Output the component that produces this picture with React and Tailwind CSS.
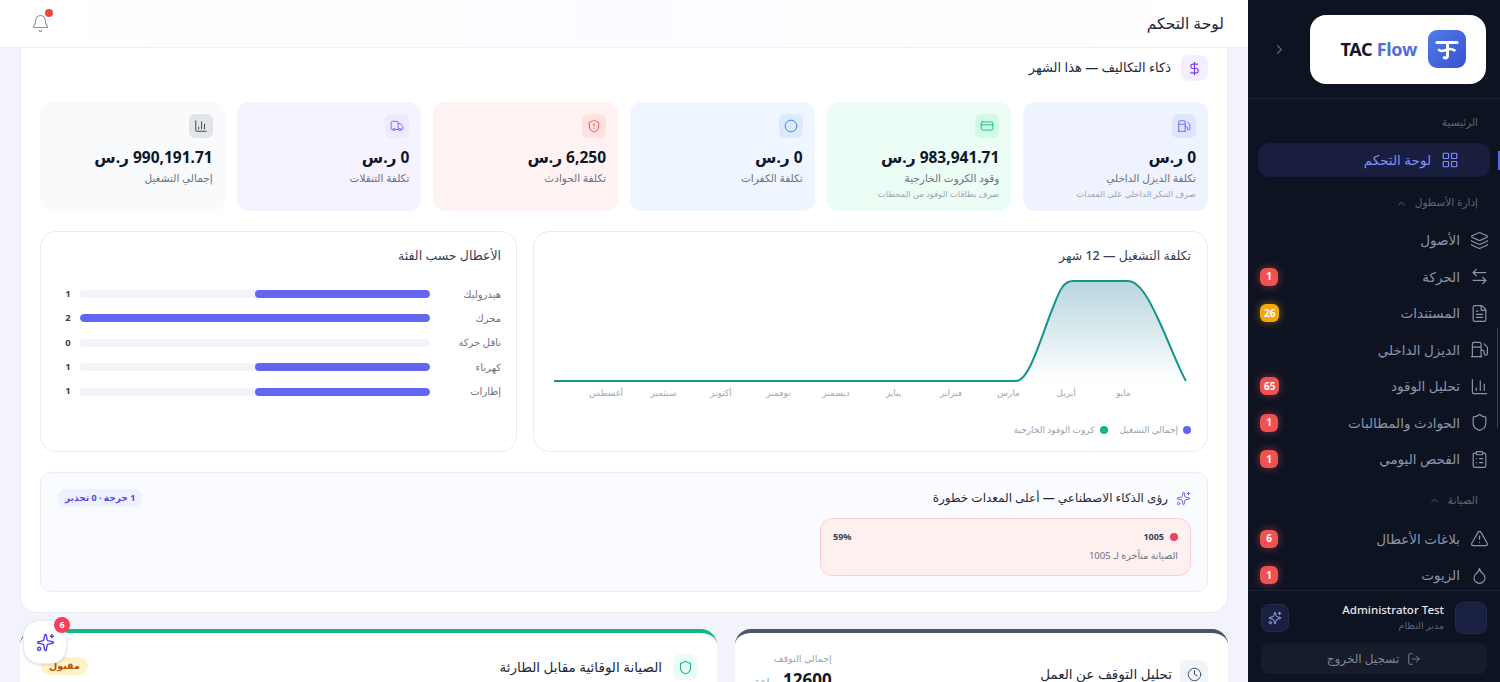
import React from "react";
import {
  LayoutGrid, Layers, ArrowLeftRight, FileText, Fuel, ChartColumn, Shield, ClipboardList,
  TriangleAlert, Droplet, Sparkles, LogOut, Bell, DollarSign, CreditCard, Circle, ShieldAlert,
  Truck, Clock, ChevronLeft, ChevronUp,
} from "lucide-react";

const fleetItems = [
  { label: "الأصول", icon: Layers },
  { label: "الحركة", icon: ArrowLeftRight, badge: "1" },
  { label: "المستندات", icon: FileText, badge: "26", amber: true },
  { label: "الديزل الداخلي", icon: Fuel },
  { label: "تحليل الوقود", icon: ChartColumn, badge: "65" },
  { label: "الحوادث والمطالبات", icon: Shield, badge: "1" },
  { label: "الفحص اليومي", icon: ClipboardList, badge: "1" },
];

const maintenanceItems = [
  { label: "بلاغات الأعطال", icon: TriangleAlert, badge: "6" },
  { label: "الزيوت", icon: Droplet, badge: "1" },
];

const kpis = [
  { value: "0 ر.س", label: "تكلفة الديزل الداخلي", sub: "صرف التنكر الداخلي على المعدات", icon: Fuel, card: "bg-[#eff3fe]", box: "bg-[#dfe5fb] text-[#6366f1]" },
  { value: "983,941.71 ر.س", label: "وقود الكروت الخارجية", sub: "صرف بطاقات الوقود من المحطات", icon: CreditCard, card: "bg-[#ecfdf5]", box: "bg-[#d1fae5] text-[#10b981]" },
  { value: "0 ر.س", label: "تكلفة الكفرات", icon: Circle, card: "bg-[#eff6ff]", box: "bg-[#dbeafe] text-[#3b82f6]" },
  { value: "6,250 ر.س", label: "تكلفة الحوادث", icon: ShieldAlert, card: "bg-[#fef2f2]", box: "bg-[#fee2e2] text-[#ef4444]" },
  { value: "0 ر.س", label: "تكلفة التنقلات", icon: Truck, card: "bg-[#f5f3ff]", box: "bg-[#ede9fe] text-[#8b5cf6]" },
  { value: "990,191.71 ر.س", label: "إجمالي التشغيل", icon: ChartColumn, card: "bg-[#f8fafc]", box: "bg-[#e2e4e8] text-[#374151]" },
];

const faults = [
  { label: "هيدروليك", count: 1 },
  { label: "محرك", count: 2 },
  { label: "ناقل حركة", count: 0 },
  { label: "كهرباء", count: 1 },
  { label: "إطارات", count: 1 },
];

const months = ["يونيو", "مايو", "أبريل", "مارس", "فبراير", "يناير", "ديسمبر", "نوفمبر", "أكتوبر", "سبتمبر", "أغسطس"];

function NavItem({ item }) {
  const Icon = item.icon;
  return (
    <div className="h-[36.5px] flex items-center pr-[11px] pl-[12px] gap-[10px] text-[#8a93a8]">
      <Icon size={19} strokeWidth={1.5} className="shrink-0" />
      <span className="flex-1 text-[13.5px]">{item.label}</span>
      {item.badge && (
        <span className={`h-[18px] min-w-[18px] px-1 rounded-md flex items-center justify-center text-[10px] font-bold text-white ${item.amber ? "bg-[#f5a70b] shadow-[0_0_8px_#f5a70b80]" : "bg-[#f05252] shadow-[0_0_8px_#f0525280]"}`}>
          {item.badge}
        </span>
      )}
    </div>
  );
}

function Sidebar() {
  return (
    <aside className="w-[252px] shrink-0 h-full bg-[#0e1322] flex flex-col relative">
      <div className="h-[99px] shrink-0 border-b border-[#1c2233] flex items-center justify-between pr-[14px] pl-[24px]">
        <div className="w-[176px] h-[69px] bg-white rounded-2xl flex items-center gap-[11px] pr-[20px]">
          <svg width="38" height="38" viewBox="0 0 38 38">
            <defs>
              <linearGradient id="logo" x1="0" y1="0" x2="1" y2="1">
                <stop offset="0" stopColor="#4f7de8" />
                <stop offset="1" stopColor="#3b50d0" />
              </linearGradient>
            </defs>
            <rect width="38" height="38" rx="9" fill="url(#logo)" />
            <path d="M9 12.5h20" stroke="#fff" strokeWidth="3.2" strokeLinecap="round" fill="none" />
            <path d="M19.5 13v13c0 2-2 2.6-3.4 1.6" stroke="#fff" strokeWidth="3" strokeLinecap="round" fill="none" />
            <path d="M11 20c3 2.4 5 .4 8.500-.6 3-.8 5-.3 7 1" stroke="#fff" strokeWidth="2.600" strokeLinecap="round" fill="none" />
          </svg>
          <span dir="ltr" className="text-[18px] font-bold text-[#111827] tracking-[-0.3px]">
            TAC <span className="text-[#4f6fd8]">Flow</span>
          </span>
        </div>
        <ChevronLeft size={15} className="text-[#5b6377] rotate-180" />
      </div>

      <div className="flex-1 overflow-hidden">
        <div className="text-[10.5px] text-[#5d6579] pr-[22px] mt-[15px] h-[16px] leading-4">الرئيسية</div>
        <div className="mr-[10px] ml-[10px] mt-[13px] h-[34px] rounded-xl bg-[#191e3f] flex items-center gap-[10px] pr-[1px] text-[#818cf8]">
          <div className="w-[20px]" />
          <LayoutGrid size={18} strokeWidth={1.6} className="shrink-0" />
          <span className="text-[13.5px]">لوحة التحكم</span>
        </div>
        <div className="flex items-center gap-2 text-[10.5px] text-[#5d6579] pr-[22px] mt-[18px] mb-[11px] h-[16px]">
          <span>إدارة الأسطول</span>
          <ChevronUp size={11} />
        </div>
        {fleetItems.map((item) => (
          <NavItem key={item.label} item={item} />
        ))}
        <div className="flex items-center gap-2 text-[10.5px] text-[#5d6579] pr-[22px] mt-[15px] mb-[12px] h-[16px]">
          <span>الصيانة</span>
          <ChevronUp size={11} />
        </div>
        {maintenanceItems.map((item) => (
          <NavItem key={item.label} item={item} />
        ))}
      </div>

      <div className="shrink-0 h-[92px] border-t border-[#1c2233] bg-[#0e1322] px-[13px] pt-[11px]">
        <div className="flex items-center gap-[11px]">
          <div className="w-8 h-8 rounded-lg bg-[#1a2040] border border-[#232a4d]" />
          <div className="flex-1">
            <div dir="ltr" className="text-[11.500px] leading-4 text-[#e5e7eb] text-right font-medium">Administrator Test</div>
            <div className="text-[9.5px] leading-4 text-[#5d6579]">مدير النظام</div>
          </div>
          <div className="w-[28px] h-[28px] rounded-lg bg-[#1a2040] border border-[#232a4d] flex items-center justify-center text-[#a5b4fc]">
            <Sparkles size={14} strokeWidth={1.6} />
          </div>
        </div>
        <div className="mt-[9px] h-[31px] rounded-lg bg-[#171c2a] flex items-center justify-center gap-2 text-[#7d8598] text-[12px]">
          <LogOut size={14} strokeWidth={1.6} className="order-first" />
          <span>تسجيل الخروج</span>
        </div>
      </div>

      <div className="absolute right-0 top-[151px] w-[2px] h-[19px] bg-[#6366f1]" />
      <div className="absolute right-[2px] top-[328px] w-[1.5px] h-[100px] bg-[#3a4152]" />
    </aside>
  );
}

function KpiCard({ kpi }) {
  const Icon = kpi.icon;
  return (
    <div className={`h-[109px] rounded-xl p-3 ${kpi.card}`}>
      <div className={`w-6 h-6 rounded-md flex items-center justify-center ${kpi.box}`}>
        <Icon size={14} strokeWidth={1.6} />
      </div>
      <div className="mt-[7px] text-[15.5px] leading-6 font-bold text-[#0f172a]">{kpi.value}</div>
      <div className="text-[10.5px] leading-4 mt-[1px] text-[#6b7280]">{kpi.label}</div>
      {kpi.sub && <div className="text-[8.5px] leading-3 mt-[2px] text-[#9ca3af]">{kpi.sub}</div>}
    </div>
  );
}

function CostChart() {
  return (
    <div className="h-[221px] rounded-2xl border border-[#e8ecf2] bg-white pt-4 px-4">
      <div className="text-[12.5px] leading-4 text-[#374151] font-medium">تكلفة التشغيل — 12 شهر</div>
      <svg width="641" height="125" viewBox="0 0 641 125" className="block mt-[9px] mx-auto">
        <defs>
          <linearGradient id="area" x1="0" y1="0" x2="0" y2="1">
            <stop offset="0" stopColor="#0e7490" stopOpacity="0.3" />
            <stop offset="1" stopColor="#0e7490" stopOpacity="0" />
          </linearGradient>
        </defs>
        <path d="M4 108H466C480 108 492 60 504 32C510 16 514 8 523 8H578C590 8 600 28 610 50C620 72 630 98 636 108Z" fill="url(#area)" />
        <path d="M4 108H466C480 108 492 60 504 32C510 16 514 8 523 8H578C590 8 600 28 610 50C620 72 630 98 636 108" fill="none" stroke="#14958c" strokeWidth="2" />
        {months.map((m, i) => (
          <text key={m} x={i === 0 ? 641 : 631 - i * 57.5} y="123" textAnchor={i === 0 ? "end" : "middle"} fontSize="9" fill="#a3a9b5" direction="rtl">{m}</text>
        ))}
      </svg>
      <div className="flex items-center gap-3 mt-[25px] text-[9px] text-[#9ca3af]">
        <span className="flex items-center gap-[5px]"><i className="w-2 h-2 rounded-sm bg-[#6366f1]" />إجمالي التشغيل</span>
        <span className="flex items-center gap-[5px]"><i className="w-2 h-2 rounded-sm bg-[#10b981]" />كروت الوقود الخارجية</span>
      </div>
    </div>
  );
}

function FaultChart() {
  return (
    <div className="h-[221px] rounded-2xl border border-[#e8ecf2] bg-white pt-4 px-[15px]">
      <div className="text-[12.5px] leading-4 text-[#374151] font-medium">الأعطال حسب الفئة</div>
      <div className="mt-[22px] flex flex-col gap-[8.4px]">
        {faults.map((f) => (
          <div key={f.label} className="h-4 flex items-center text-[10px] text-[#6b7280]">
            <span className="w-[71px] shrink-0">{f.label}</span>
            <div className="w-[350px] h-2 rounded-full bg-[#f1f5f9] overflow-hidden">
              {f.count > 0 && <div className={`h-full rounded-full bg-[#6366f1] ${f.count === 2 ? "w-full" : "w-1/2"}`} />}
            </div>
            <span className="flex-1 text-center font-bold text-[#374151] text-[9.5px]">{f.count}</span>
          </div>
        ))}
      </div>
    </div>
  );
}

function AiInsights() {
  return (
    <div className="mt-5 h-[120px] rounded-xl border border-[#e8ecf7] bg-[#fafbff] px-4 pt-4">
      <div className="flex items-center justify-between h-[18px]">
        <div className="flex items-center gap-2">
          <Sparkles size={15} strokeWidth={1.6} className="text-[#6366f1]" />
          <span className="text-[12px] text-[#1f2937] font-medium">رؤى الذكاء الاصطناعي — أعلى المعدات خطورة</span>
        </div>
        <span className="h-[18px] px-2 rounded-full bg-[#eef2ff] text-[#4f46e5] text-[9px] font-bold flex items-center">1 حرجة · 0 تحذير</span>
      </div>
      <div className="mt-[11px] w-[371px] h-[58px] rounded-xl bg-[#fff0f0] border border-[#fecdd3] px-3 pt-[10px]">
        <div className="flex items-center justify-between text-[9px] font-bold text-[#374151] h-4">
          <span className="flex items-center gap-[6px]">
            <i className="w-2 h-2 rounded-full bg-[#f43f5e]" />
            1005
          </span>
          <span>59%</span>
        </div>
        <div className="mt-[4px] text-[9.5px] text-[#6b7280]">الصيانة متأخرة لـ 1005</div>
      </div>
    </div>
  );
}

export default function App() {
  return (
    <div dir="rtl" className="w-screen h-screen overflow-hidden flex bg-[#f3f4fb] font-['Noto_Sans','DejaVu_Sans',sans-serif]">
      <Sidebar />
      <main className="flex-1 min-w-0 h-full flex flex-col relative">
        <header className="h-12 shrink-0 bg-gradient-to-l from-white via-[#fdfbff] to-white border-b border-[#eef0f5] flex items-center justify-between pr-6 pl-[31px]">
          <h1 className="text-[15.5px] text-[#1f2937]">لوحة التحكم</h1>
          <div className="relative">
            <Bell size={19} strokeWidth={1.3} className="text-[#8a8f99]" />
            <span className="absolute top-[-5px] left-[14px] w-2 h-2 rounded-full bg-[#ef4444]" />
          </div>
        </header>

        <div className="flex-1 overflow-hidden px-5">
          <section className="bg-white rounded-b-2xl border border-t-0 border-[#e8ebf3] px-[19px] pt-[7px] pb-5">
            <div className="flex items-center gap-[10px] h-[26px]">
              <span className="w-[27px] h-[26px] rounded-lg bg-[#f3effe] text-[#7c3aed] flex items-center justify-center">
                <DollarSign size={15} strokeWidth={1.8} />
              </span>
              <h2 className="text-[13px] text-[#1f2937] font-medium">ذكاء التكاليف — هذا الشهر</h2>
            </div>
            <div className="grid grid-cols-6 gap-3 mt-[21px]">
              {kpis.map((k) => (
                <KpiCard key={k.label} kpi={k} />
              ))}
            </div>
            <div className="grid grid-cols-[675px_477px] gap-4 mt-5">
              <CostChart />
              <FaultChart />
            </div>
            <AiInsights />
          </section>

          <div className="grid grid-cols-[493px_697px] gap-[18px] mt-4">
            <div className="h-[200px] bg-white rounded-t-2xl border-t-[4px] border-[#475569] pt-[18px] pr-[20px] pl-[19px] flex justify-between">
              <div className="flex items-center gap-2 h-[28px] mt-[9px]">
                <span className="w-7 h-7 rounded-lg bg-[#f1f5f9] text-[#475569] flex items-center justify-center">
                  <Clock size={15} strokeWidth={1.6} />
                </span>
                <h3 className="text-[13.500px] text-[#1f2937] font-medium">تحليل التوقف عن العمل</h3>
              </div>
              <div>
                <div className="text-[9.5px] text-[#9ca3af] leading-4">إجمالي التوقف</div>
                <div className="mt-[3px] flex items-baseline gap-1 leading-5">
                  <span className="text-[17px] font-bold text-[#111827]">12600</span>
                  <span className="text-[11px] text-[#9ca3af]">ساعة</span>
                </div>
              </div>
            </div>
            <div className="h-[200px] bg-white rounded-t-2xl border-t-[4px] border-[#10b981] pt-[21px] pr-[19px] pl-[21px] flex justify-between items-start">
              <div className="flex items-center gap-[11px]">
                <span className="w-[25px] h-[26px] rounded-lg bg-[#ecfdf5] text-[#10b981] flex items-center justify-center">
                  <Shield size={15} strokeWidth={1.7} />
                </span>
                <h3 className="text-[13.500px] text-[#1f2937] font-medium">الصيانة الوقائية مقابل الطارئة</h3>
              </div>
              <span className="mt-[3px] h-[18px] px-2 rounded-full bg-[#fef3c7] text-[#b45309] text-[9.5px] font-bold flex items-center">مقبول</span>
            </div>
          </div>
        </div>

        <button className="absolute left-[23px] top-[620px] w-[44px] h-[44px] rounded-2xl bg-white border border-[#e8ebf3] shadow-sm flex items-center justify-center text-[#4f46e5]">
          <Sparkles size={19} strokeWidth={1.8} />
          <span className="absolute -top-[4px] -right-[4px] w-4 h-4 rounded-full bg-[#f43f5e] text-white text-[9px] font-bold flex items-center justify-center">6</span>
        </button>
      </main>
    </div>
  );
}
